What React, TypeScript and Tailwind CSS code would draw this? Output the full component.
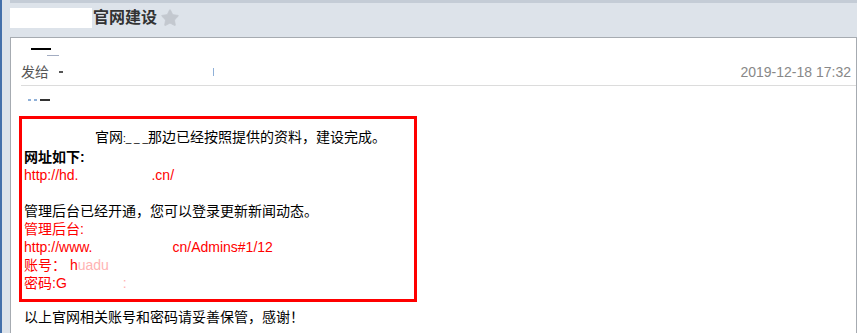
import { Star } from "lucide-react";

const cjk = "font-['Liberation_Sans','Noto_Sans_CJK_SC',sans-serif]";

const MailHeader = () => (
  <div className="flex h-[37px] items-start border-t-[3px] border-[#c4ccd6] pt-[5px]">
    {/* sender name hidden behind a white block */}
    <div className="h-[20px] w-[82px] bg-white" />
    <div className="ml-[1px] text-[16px] font-bold leading-[20px] text-[#333]">官网建设</div>
    <Star size={20} className="ml-[3px] fill-[#c3c8cf] text-[#c3c8cf]" strokeWidth={1} />
  </div>
);

const App = () => {
  return (
    <div className={`flex h-[333px] w-[857px] overflow-hidden bg-[#dde3ea] ${cjk}`}>
      <div className="w-[2px] bg-[#4470aa]" />
      <div className="flex flex-1 flex-col pl-[8px]">
        <MailHeader />

        <div className="flex-1 border-l border-r border-t border-[#a6abb1] bg-white">
          {/* sender row */}
          <div className="h-[24px] pl-[20px] pt-[10px]">
            <div className="h-[2px] w-[20px] bg-black" />
            <div className="ml-[16px] mt-[5px] h-px w-[12px] bg-[#a3adc2]" />
          </div>

          <div className="flex h-[20px] items-center justify-between pl-[10px] pr-[5px] text-[14px]">
            <div className="flex items-center text-[#555]">
              <span>发给</span>
              <span className="ml-[10px] h-[2px] w-[4px] bg-[#555]" />
              <span className="ml-[150px] h-[8px] w-px bg-[#8fb0d8]" />
            </div>
            <div className="flex items-center text-[#888]">
              <span>2019-12-18 17:32</span>
            </div>
          </div>

          <div className="ml-[10px] mt-[3px] h-px bg-[#dcdcdc]" />

          {/* greeting, hidden */}
          <div className="flex h-[30px] items-start gap-[3px] pl-[17px] pt-[13px]">
            <span className="h-[2px] w-[3px] bg-[#8fb0d8]" />
            <span className="h-[2px] w-[3px] bg-[#8fb0d8]" />
            <span className="h-[2px] w-[10px] bg-[#333]" />
          </div>

          <div className="ml-[8px] h-[186px] w-[398px] border-[3px] border-[#ff0000] px-[2px] pt-[9px] text-[14px] leading-[18px]">
            <div className="text-black">
              <span className="inline-block w-[71px]" />
              官网<span className="text-[10px]">:_ _ _</span>那边已经按照提供的资料，建设完成。
            </div>
            <div className="font-bold text-black">网址如下:</div>
            <div className="text-[#ff0000]">
              http://hd.<span className="inline-block w-[73px]" />.cn/
            </div>
            <div className="h-[18px]" />
            <div className="text-black">管理后台已经开通，您可以登录更新新闻动态。</div>
            <div className="text-[#ff0000]">管理后台:</div>
            <div className="text-[#ff0000]">
              http://www.<span className="inline-block w-[80px]" />cn/Admins#1/12
            </div>
            <div className="text-[#ff0000]">
              账号： h<span className="text-[#ffb3b3]">uadu</span>
            </div>
            <div className="text-[#ff0000]">
              密码:G<span className="inline-block w-[56px]" />
              <span className="text-[#ffb3b3]">:</span>
            </div>
          </div>

          <div className="ml-[13px] mt-[6px] text-[14px] leading-[18px] text-black">
            以上官网相关账号和密码请妥善保管，感谢！
          </div>
        </div>
      </div>
    </div>
  );
};

export default App;
